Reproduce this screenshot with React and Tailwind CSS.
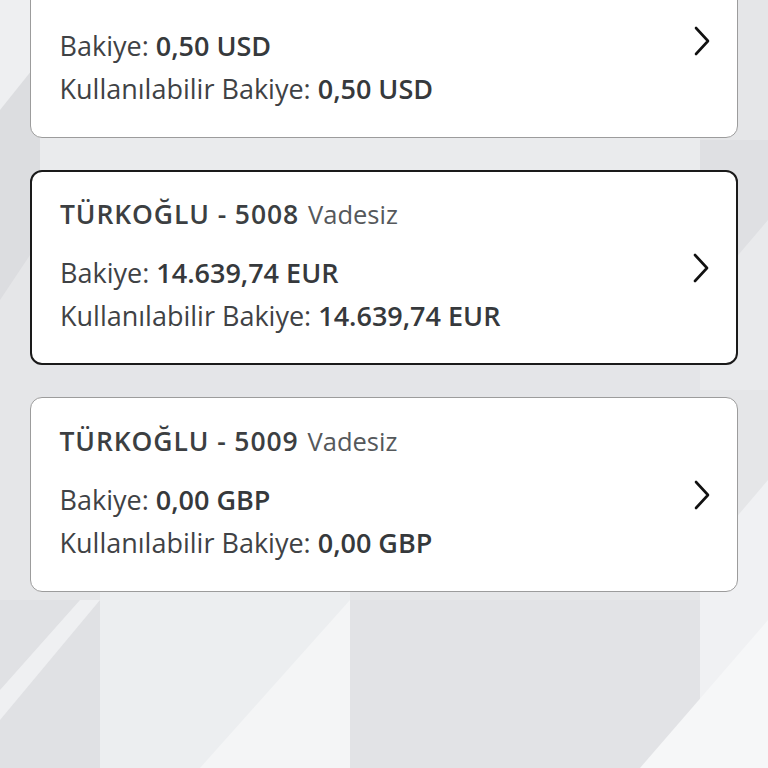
import React from 'react';

const accounts = [
  { title: 'TÜRKOĞLU - 5007', balance: '0,50 USD', available: '0,50 USD', selected: false },
  { title: 'TÜRKOĞLU - 5008', balance: '14.639,74 EUR', available: '14.639,74 EUR', selected: true },
  { title: 'TÜRKOĞLU - 5009', balance: '0,00 GBP', available: '0,00 GBP', selected: false },
];

const Chevron = () => (
  <svg width="18" height="30" viewBox="0 0 18 30" fill="none">
    <path d="M3 2 L15 15 L3 28" stroke="#111" strokeWidth="2.6" strokeLinecap="round" strokeLinejoin="round" />
  </svg>
);

const AccountCard = ({ account }) => (
  <div
    className={
      account.selected
        ? 'h-[195px] shrink-0 bg-white rounded-[12px] border-2 border-[#1a1a1a] flex items-center pl-[28px] pr-[26px]'
        : 'h-[195px] shrink-0 bg-white rounded-[12px] border-[1.5px] border-[#9c9c9c] flex items-center pl-[28.5px] pr-[26.5px]'
    }
  >
    <div className="flex-1 flex flex-col">
      <div className="leading-[32px] text-[#3c3f42] whitespace-nowrap">
        <span className="font-semibold text-[26.5px] tracking-[0.9px]">{account.title}</span>
        <span className="text-[#55585b] text-[25.5px] ml-[9px]">Vadesiz</span>
      </div>
      <div className="mt-[16.5px] leading-[43px] text-[27px] text-[#3f4245] whitespace-nowrap">
        Bakiye: <span className="font-semibold text-[#36393c]">{account.balance}</span>
      </div>
      <div className="leading-[43px] text-[27px] text-[#3f4245] whitespace-nowrap">
        Kullanılabilir Bakiye: <span className="font-semibold text-[#36393c]">{account.available}</span>
      </div>
    </div>
    <Chevron />
  </div>
);

export default function App() {
  return (
    <div className="relative w-[768px] h-[768px] overflow-hidden bg-[#e5e6e8]" style={{ fontFamily: '"Open Sans", "Noto Sans", sans-serif' }}>
      <svg className="absolute inset-0" width="768" height="768" viewBox="0 0 768 768">
        <polygon points="0,0 40,0 40,110 0,110" fill="#eeeff1" />
        <polygon points="0,110 40,60 40,240 0,300" fill="#dcdde0" />
        <polygon points="100,590 350,590 350,768 100,768" fill="#eceef0" />
        <polygon points="200,768 350,600 350,768" fill="#f4f5f6" />
        <polygon points="0,600 100,600 100,768 0,768" fill="#e0e1e4" />
        <polygon points="0,690 80,600 100,600 0,720" fill="#eff0f2" />
        <polygon points="350,600 700,600 700,768 350,768" fill="#e2e3e6" />
        <polygon points="700,560 768,480 768,768 700,768" fill="#f0f1f3" />
        <polygon points="640,768 768,620 768,768" fill="#f6f7f8" />
        <polygon points="700,140 768,140 768,390 700,390" fill="#dfe0e3" />
        <polygon points="700,300 768,220 768,390 700,390" fill="#e9eaec" />
        <polygon points="40,138 700,138 700,170 40,170" fill="#eaebed" />
        <polygon points="40,365 700,365 700,397 40,397" fill="#e4e5e8" />
      </svg>
      <div className="relative flex flex-col gap-[32px] px-[30px] -mt-[57px]">
        {accounts.map((a) => (
          <AccountCard key={a.title} account={a} />
        ))}
      </div>
    </div>
  );
}
